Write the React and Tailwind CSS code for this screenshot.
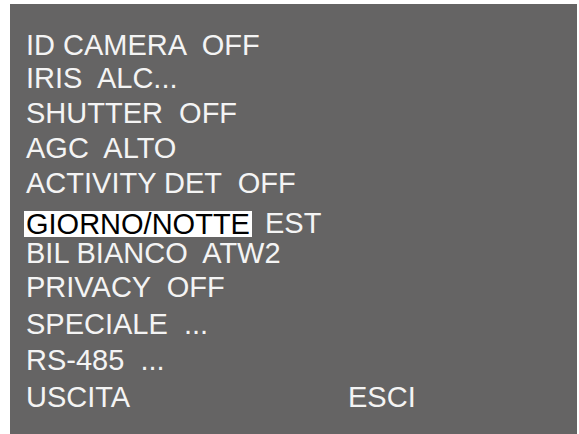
import React from 'react';

const rows = [
  { label: 'ID CAMERA', value: 'OFF', cls: 'mt-0' },
  { label: 'IRIS', value: 'ALC...', cls: '-mt-[2px]' },
  { label: 'SHUTTER', value: 'OFF', cls: 'mt-0' },
  { label: 'AGC', value: 'ALTO', cls: 'mt-0' },
  { label: 'ACTIVITY DET', value: 'OFF', cls: 'mt-0' },
];

const rowsAfter = [
  { label: 'BIL BIANCO', value: 'ATW2', cls: '-mt-[5px]' },
  { label: 'PRIVACY', value: 'OFF', cls: '-mt-[1px]' },
  { label: 'SPECIALE', value: '...', cls: 'mt-[2px]' },
  { label: 'RS-485', value: '...', cls: 'mt-[1px]' },
];

const MenuRow = ({ label, value, cls }) => (
  <div className={`h-[35px] leading-[35px] whitespace-pre ${cls}`}>
    {label}
    {'  '}
    {value}
  </div>
);

const App = () => {
  return (
    <div className="w-[579px] h-[434px] bg-white pl-[10px] pt-[4px] pr-[2px] overflow-hidden">
      <div
        className="h-[430px] bg-[#656464] pl-[16px] pt-[24px] text-[29px] text-[#f4f4f4]"
        style={{ fontFamily: '"Liberation Sans", Arial, sans-serif' }}
      >
        {rows.map(r => (
          <MenuRow key={r.label} {...r} />
        ))}

        <div className="h-[35px] mt-[5px] flex items-center whitespace-pre">
          <span className="-ml-[2px] px-[2px] h-[26px] leading-[26px] bg-white text-black">
            GIORNO/NOTTE
          </span>
          <span className="ml-[13px] leading-[35px]">EST</span>
        </div>

        {rowsAfter.map(r => (
          <MenuRow key={r.label} {...r} />
        ))}

        <div className="h-[35px] mt-[2px] leading-[35px] flex">
          <span className="w-[322px]">USCITA</span>
          <span>ESCI</span>
        </div>
      </div>
    </div>
  );
};

export default App;
